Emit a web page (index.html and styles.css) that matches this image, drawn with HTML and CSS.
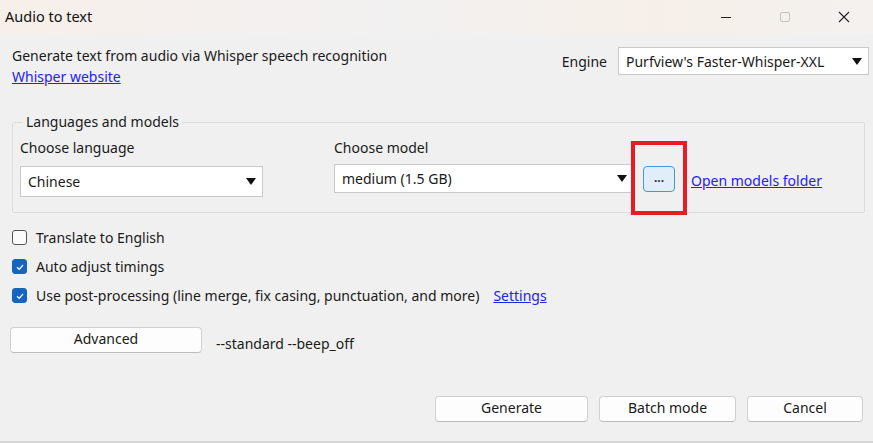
FILE: index.html
```html
<!DOCTYPE html>
<html>
<head>
<meta charset="utf-8">
<link rel="stylesheet" href="styles.css">
</head>
<body>
<div class="window">
  <div class="titlebar">
    <div class="title">Audio to text</div>
    <div class="controls">
      <span class="ctl"><svg width="12" height="12" viewBox="0 0 12 12"><path d="M1 6.5h10" stroke="#222" stroke-width="1"/></svg></span>
      <span class="ctl"><svg width="12" height="12" viewBox="0 0 12 12"><rect x="1.5" y="1.5" width="9" height="9" rx="1.5" fill="none" stroke="#c4c4c4" stroke-width="1"/></svg></span>
      <span class="ctl"><svg width="12" height="12" viewBox="0 0 12 12"><path d="M1 1L11 11M11 1L1 11" stroke="#222" stroke-width="1.1"/></svg></span>
    </div>
  </div>
  <div class="content">
    <div class="top">
      <div class="intro">
        <div>Generate text from audio via Whisper speech recognition</div>
        <a class="link">Whisper website</a>
      </div>
      <div class="engine">
        <span>Engine</span>
        <div class="combo engine-combo"><span>Purfview's Faster-Whisper-XXL</span><span class="arrow"></span></div>
      </div>
    </div>
    <fieldset class="group">
      <legend>Languages and models</legend>
      <div class="group-row">
        <div class="col lang">
          <div class="lbl">Choose language</div>
          <div class="combo lang-combo"><span>Chinese</span><span class="arrow"></span></div>
        </div>
        <div class="col model">
          <div class="lbl">Choose model</div>
          <div class="model-row">
            <div class="combo model-combo"><span>medium (1.5 GB)</span><span class="arrow"></span></div>
            <div class="dots-wrap">
              <button class="dots">...</button>
              <div class="highlight"></div>
            </div>
            <a class="link folder">Open models folder</a>
          </div>
        </div>
      </div>
    </fieldset>
    <div class="checks">
      <label class="check"><span class="box"></span>Translate to English</label>
      <label class="check"><span class="box on"><svg width="10" height="10" viewBox="0 0 10 10"><path d="M2 5.2L4.2 7.3L8 3" fill="none" stroke="#fff" stroke-width="1.2"/></svg></span>Auto adjust timings</label>
      <label class="check"><span class="box on"><svg width="10" height="10" viewBox="0 0 10 10"><path d="M2 5.2L4.2 7.3L8 3" fill="none" stroke="#fff" stroke-width="1.2"/></svg></span>Use post-processing (line merge, fix casing, punctuation, and more)<a class="link settings">Settings</a></label>
    </div>
    <div class="adv-row">
      <button class="btn adv">Advanced</button>
      <span class="params">--standard --beep_off</span>
    </div>
    <div class="bottom">
      <button class="btn gen">Generate</button>
      <button class="btn batch">Batch mode</button>
      <button class="btn cancel">Cancel</button>
    </div>
  </div>
</div>
</body>
</html>
```
FILE: styles.css
```css
* { box-sizing: border-box; }
html, body { margin: 0; padding: 0; }
body {
  width: 873px;
  height: 443px;
  overflow: hidden;
  font-family: "Noto Sans", "Open Sans", "DejaVu Sans", sans-serif;
  font-size: 14px;
  color: #1a1a1a;
  background: #f0f0f0;
}
.window { width: 873px; height: 443px; display: flex; flex-direction: column; }
.titlebar {
  height: 33px;
  display: flex;
  align-items: center;
  justify-content: space-between;
  background: linear-gradient(90deg, #f7efea 0%, #f2f1f1 45%, #f6efe8 75%, #f4f1ef 100%);
}
.title { padding-left: 5px; font-size: 14.5px; color: #111; padding-bottom: 1px; }
.controls { display: flex; height: 100%; }
.ctl { width: 59px; display: flex; align-items: center; justify-content: center; }
.content {
  flex: 1;
  position: relative;
  padding: 12px 9px 0 12px;
  border-bottom: 2px solid #d8d8d8;
  display: flex;
  flex-direction: column;
}
.top { display: flex; justify-content: space-between; align-items: flex-start; height: 71px; }
.intro { line-height: 21px; }
.link { color: #2222ee; text-decoration: underline; cursor: pointer; }
.engine { display: flex; align-items: center; gap: 11px; margin-top: 2px; margin-right: -5px; }
.combo {
  background: #fff;
  border: 1px solid #c9c9c9;
  display: flex;
  align-items: center;
  justify-content: space-between;
  padding: 0 6px 0 7px;
}
.engine-combo { width: 251px; height: 28px; }
.arrow {
  width: 0; height: 0;
  border-left: 5px solid transparent;
  border-right: 5px solid transparent;
  border-top: 7px solid #111;
}
.group {
  margin: 0;
  padding: 0 7px 0 7px;
  border: 1px solid #dcdcdc;
  border-radius: 2px;
  width: 853px;
  height: 99px;
  position: relative;
  top: -2px;
}
.group legend { padding: 0 3px; margin-left: 3px; line-height: 16px; }
.group-row { display: flex; margin-top: 8px; }
.lbl { line-height: 18px; margin-top: 1px; }
.lang { width: 314px; }
.lang-combo { width: 243px; height: 31px; margin-top: 9px; }
.model-row { display: flex; align-items: center; margin-top: 7px; }
.model-combo { width: 300px; height: 29px; }
.dots-wrap { position: relative; margin-left: 9px; }
.dots {
  width: 32px;
  height: 26px;
  background: #e0eef9;
  border: 1px solid #4f94d4;
  border-radius: 4px;
  font-family: inherit;
  font-size: 12px;
  font-weight: bold;
  padding: 0 0 2px;
  color: #333;
  display: block;
}
.highlight {
  position: absolute;
  left: -12px;
  top: -25px;
  width: 56px;
  height: 74px;
  border: 4px solid #e81c24;
}
.folder { margin-left: 16px; margin-top: 4px; }
.checks { display: flex; flex-direction: column; gap: 8px; margin-top: 12px; }
.check { display: flex; align-items: center; height: 21px; }
.box {
  width: 15px; height: 15px;
  border: 1px solid #555;
  border-radius: 3px;
  margin-right: 9px;
  background: #fbfbfb;
  display: flex; align-items: center; justify-content: center;
}
.box.on { background: #1565c0; border-color: #1565c0; }
.settings { margin-left: 14px; }
.adv-row { display: flex; align-items: center; margin-top: 21px; margin-left: -2px; }
.btn {
  font-family: inherit;
  font-size: 14px;
  color: #1a1a1a;
  background: #fdfdfd;
  border: 1px solid #d0d0d0;
  border-bottom-color: #bcbcbc;
  border-radius: 4px;
  height: 26px;
  padding: 0 0 3px;
}
.adv { width: 192px; }
.params { margin-left: 14px; margin-top: 7px; }
.bottom { display: flex; justify-content: flex-end; gap: 11px; margin-top: 43px; margin-right: 1px; }
.gen { width: 153px; }
.batch { width: 137px; }
.cancel { width: 116px; }
```
